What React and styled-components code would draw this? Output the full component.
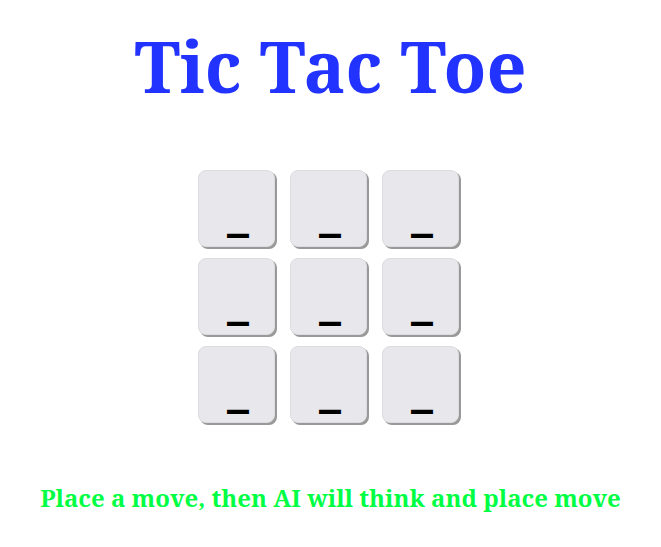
import styled, { createGlobalStyle } from "styled-components";

const GlobalStyle = createGlobalStyle`
  body {
    margin: 0;
    background: #fff;
    font-family: "Noto Serif", "DejaVu Serif", serif;
  }
`;

const Page = styled.div`
  display: flex;
  flex-direction: column;
  align-items: center;
  padding-top: 22px;
`;

const Title = styled.h1`
  margin: 0;
  font-size: 70px;
  font-weight: bold;
  color: #2233ff;
  line-height: 88px;
`;

const Board = styled.div`
  display: grid;
  grid-template-columns: repeat(3, 77px);
  column-gap: 15px;
  row-gap: 11px;
  margin: 60px 4px 0 0;
`;

const Cell = styled.button`
  width: 77px;
  height: 77px;
  padding: 0 0 12px 3px;
  display: flex;
  align-items: flex-end;
  justify-content: center;
  background: #e8e8ec;
  border: 1px solid #dcdce0;
  border-radius: 8px;
  box-shadow: 2px 2px 0 #999;
  font-family: "DejaVu Sans", sans-serif;
  font-size: 44px;
  font-weight: bold;
  color: #000;
  line-height: 1;
  cursor: pointer;
`;

const Status = styled.h2`
  margin: 58px 0 0;
  font-size: 24px;
  font-weight: bold;
  color: #00ff44;
`;

export default function App() {
  const cells = Array(9).fill("_");
  return (
    <>
      <GlobalStyle />
      <Page>
        <Title>Tic Tac Toe</Title>
        <Board>
          {cells.map((c, i) => (
            <Cell key={i}>{c}</Cell>
          ))}
        </Board>
        <Status>Place a move, then AI will think and place move</Status>
      </Page>
    </>
  );
}
